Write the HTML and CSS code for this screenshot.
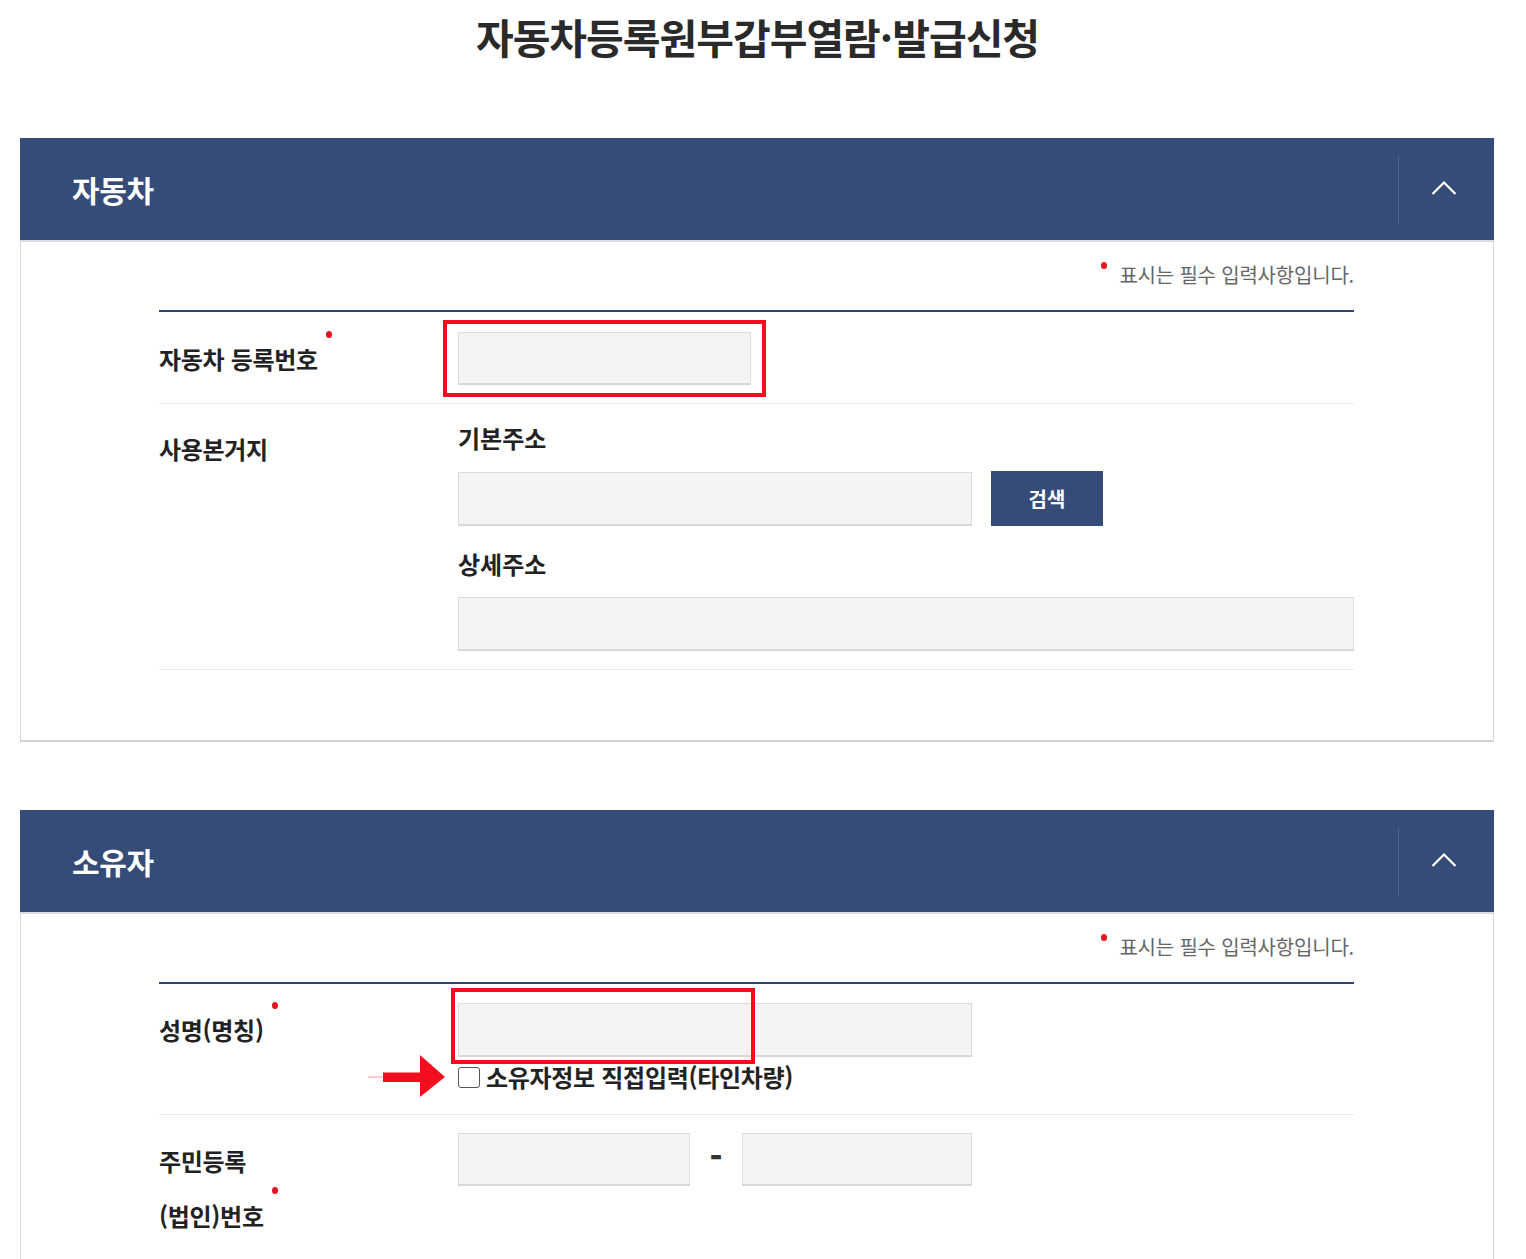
FILE: index.html
```html
<!DOCTYPE html>
<html lang="ko">
<head>
<meta charset="utf-8">
<title>자동차등록원부갑부열람·발급신청</title>
<link rel="stylesheet" href="styles.css">
</head>
<body>
<h1 class="page-title">자동차등록원부갑부열람·발급신청</h1>

<section class="panel">
  <div class="panel-head">
    <h2 class="panel-title">자동차</h2>
    <button class="panel-toggle" type="button" aria-label="접기">
      <svg width="26" height="16" viewBox="0 0 26 16"><polyline points="1.5,14 13,2.5 24.5,14" fill="none" stroke="#fff" stroke-width="2.2"/></svg>
    </button>
  </div>
  <div class="panel-body">
    <p class="notice"><span class="notice-dot"></span>표시는 필수 입력사항입니다.</p>
    <div class="form">
      <div class="row">
        <div class="label"><span class="req">자동차 등록번호</span></div>
        <div class="field">
          <div class="hl-wrap">
            <input class="input w293" type="text">
            <span class="highlight hl-1"></span>
          </div>
        </div>
      </div>
      <div class="row row-address">
        <div class="label">사용본거지</div>
        <div class="field">
          <div class="sub-label">기본주소</div>
          <div class="inline">
            <input class="input w514" type="text">
            <button class="btn-search" type="button">검색</button>
          </div>
          <div class="sub-label sub-label-2">상세주소</div>
          <input class="input w-full" type="text">
        </div>
      </div>
    </div>
  </div>
</section>

<section class="panel panel-2">
  <div class="panel-head">
    <h2 class="panel-title">소유자</h2>
    <button class="panel-toggle" type="button" aria-label="접기">
      <svg width="26" height="16" viewBox="0 0 26 16"><polyline points="1.5,14 13,2.5 24.5,14" fill="none" stroke="#fff" stroke-width="2.2"/></svg>
    </button>
  </div>
  <div class="panel-body panel-body-open">
    <p class="notice"><span class="notice-dot"></span>표시는 필수 입력사항입니다.</p>
    <div class="form">
      <div class="row row-name">
        <div class="label"><span class="req">성명(명칭)</span></div>
        <div class="field">
          <div class="hl-wrap">
            <input class="input w514" type="text">
            <span class="highlight hl-2"></span>
          </div>
          <label class="check">
            <svg class="arrow" width="78" height="42" viewBox="0 0 78 42">
              <line x1="0" y1="22" x2="15" y2="22" stroke="#f59aa3" stroke-width="1"/>
              <rect x="15" y="17.5" width="39" height="9.5" fill="#f20e1e"/>
              <polygon points="52,0 77,22 52,42" fill="#f20e1e"/>
            </svg>
            <input class="checkbox" type="checkbox">
            <span>소유자정보 직접입력(타인차량)</span>
          </label>
        </div>
      </div>
      <div class="row row-jumin">
        <div class="label label-2line">주민등록<br><span class="req">(법인)번호</span></div>
        <div class="field">
          <div class="inline">
            <input class="input w232" type="text">
            <span class="dash">-</span>
            <input class="input w230" type="text">
          </div>
        </div>
      </div>
    </div>
  </div>
</section>
</body>
</html>
```

FILE: styles.css
```css
* { box-sizing: border-box; }

html, body {
  margin: 0;
  padding: 0;
  background: #fff;
}

body {
  font-family: "Noto Sans CJK KR", "Noto Sans", sans-serif;
  color: #222;
  width: 1526px;
  height: 1259px;
  overflow: hidden;
}

.page-title {
  margin: 0;
  padding: 11px 11px 0 0;
  height: 138px;
  text-align: center;
  font-size: 41px;
  line-height: 50px;
  font-weight: 700;
  letter-spacing: -1px;
  color: #2a2a2a;
}

.panel {
  margin-left: 20px;
  width: 1474px;
}

.panel-2 {
  margin-top: 68px;
}

.panel-head {
  height: 104px;
  background: #354b78;
  display: flex;
  align-items: center;
  justify-content: space-between;
  border-bottom: 2px solid #d9dde5;
}

.panel-title {
  margin: 0 0 0 52px;
  color: #fff;
  font-size: 30px;
  font-weight: 700;
  letter-spacing: -0.4px;
  line-height: 40px;
}

.panel-toggle {
  width: 96px;
  height: 70px;
  border: 0;
  border-left: 1px solid #4a5f8a;
  background: transparent;
  display: flex;
  align-items: center;
  justify-content: center;
  padding: 0 6px 4px 0;
  margin-top: 2px;
}

.panel-body {
  border: 1px solid #d6d6d6;
  border-top: 0;
  border-bottom: 2px solid #d2d2d2;
  padding: 0 139px 70px 138px;
}

.panel-body-open {
  border-bottom: 0;
  padding-bottom: 0;
}

.notice {
  margin: 0;
  height: 68px;
  padding-top: 18px;
  text-align: right;
  font-size: 20px;
  line-height: 30px;
  letter-spacing: -0.2px;
  color: #666;
  display: flex;
  justify-content: flex-end;
  align-items: flex-start;
}

.notice-dot {
  width: 6px;
  height: 7px;
  border-radius: 50%;
  background: #e8101e;
  margin: 2px 12px 0 0;
}

.form {
  border-top: 2px solid #2f4677;
}

.row {
  display: flex;
  border-bottom: 1px solid #ebebeb;
  padding: 20px 0 18px;
}

.label {
  width: 299px;
  flex: none;
  padding-top: 12px;
  font-size: 24px;
  line-height: 30px;
  font-weight: 700;
  letter-spacing: -0.3px;
  color: #222;
}

.label-2line {
  padding-top: 0;
  line-height: 55px;
}

.req {
  position: relative;
}

.req::after {
  content: "";
  position: absolute;
  right: -14px;
  top: -10px;
  width: 6px;
  height: 7px;
  border-radius: 50%;
  background: #e8101e;
}

.label-2line .req::after {
  top: -11px;
  right: -14px;
}

.field {
  flex: 1;
  display: flex;
  flex-direction: column;
  align-items: flex-start;
}

.hl-wrap {
  position: relative;
}

.input {
  display: block;
  height: 53px;
  background: #f4f4f4;
  border: 1px solid #dcdcdc;
  border-bottom: 2px solid #d8d8d8;
  border-radius: 0;
  margin: 0;
  padding: 0 12px;
  font-size: 18px;
  font-family: inherit;
}

.w293 { width: 293px; }
.w514 { width: 514px; height: 54px; }
.w232 { width: 232px; }
.w230 { width: 230px; }
.w-full { width: 896px; height: 54px; }

.highlight {
  position: absolute;
  border: 4px solid #f20e1e;
  pointer-events: none;
}

.hl-1 {
  left: -15px;
  top: -12px;
  width: 323px;
  height: 77px;
}

.hl-2 {
  left: -7px;
  top: -15px;
  width: 304px;
  height: 76px;
}

.sub-label {
  font-size: 24px;
  line-height: 32px;
  font-weight: 700;
  letter-spacing: 0;
  color: #222;
  margin-bottom: 17px;
}

.sub-label-2 {
  margin-top: 22px;
}

.inline {
  display: flex;
  align-items: center;
}

.btn-search {
  margin-left: 19px;
  width: 112px;
  height: 55px;
  border: 0;
  background: #354b78;
  color: #fff;
  font-family: inherit;
  font-size: 20px;
  letter-spacing: 0;
  font-weight: 700;
}

.row-address {
  padding-top: 18px;
}

.row-name {
  padding-top: 19px;
  padding-bottom: 22px;
}

.check {
  position: relative;
  margin-top: 5px;
  display: flex;
  align-items: center;
  font-size: 24px;
  line-height: 30px;
  font-weight: 700;
  letter-spacing: -0.3px;
  color: #222;
}

.arrow {
  position: absolute;
  left: -90px;
  top: -7px;
}

.checkbox {
  -webkit-appearance: none;
  appearance: none;
  width: 22px;
  height: 21px;
  margin: 0 6px 0 0;
  border: 1.5px solid #555;
  border-radius: 3px;
  background: #fff;
}

.row-jumin {
  padding-top: 18px;
  border-bottom: 0;
}

.dash {
  width: 52px;
  text-align: center;
  font-size: 34px;
  font-weight: 900;
  color: #333;
  line-height: 1;
  margin-top: -8px;
}
```
